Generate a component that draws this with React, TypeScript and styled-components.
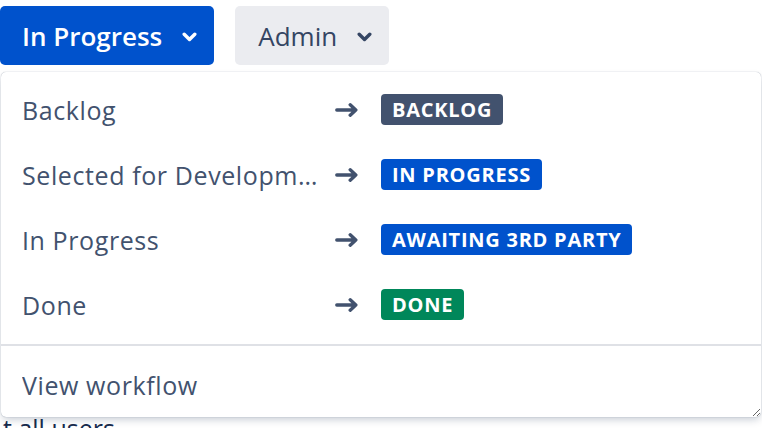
import React from 'react'
import styled, { createGlobalStyle } from 'styled-components'

const GlobalStyle = createGlobalStyle`
  html, body {
    margin: 0;
    padding: 0;
    background: #fff;
  }
  body {
    font-family: "Segoe UI", "Open Sans", "Noto Sans", sans-serif;
    color: #172b4d;
    overflow: hidden;
  }
`

type Tone = 'default' | 'progress' | 'success'

interface Transition {
  from: string
  to: string
  tone: Tone
}

const transitions: Transition[] = [
  { from: 'Backlog', to: 'Backlog', tone: 'default' },
  { from: 'Selected for Development', to: 'In Progress', tone: 'progress' },
  { from: 'In Progress', to: 'Awaiting 3rd Party', tone: 'progress' },
  { from: 'Done', to: 'Done', tone: 'success' },
]

const toneColor: Record<Tone, string> = {
  default: '#42526e',
  progress: '#0052cc',
  success: '#00875a',
}

const Chevron: React.FC<{ color: string }> = ({ color }) => (
  <svg width="15" height="10" viewBox="0 0 15 10" aria-hidden>
    <path
      d="M2.2 2.2 L7.5 7.5 L12.8 2.2"
      fill="none"
      stroke={color}
      strokeWidth="3.4"
      strokeLinecap="round"
      strokeLinejoin="round"
    />
  </svg>
)

const Arrow = () => (
  <svg width="23" height="14" viewBox="0 0 23 14" aria-hidden>
    <path
      d="M1.8 7 H20.8 M15.2 1.8 L20.8 7 L15.2 12.2"
      fill="none"
      stroke="#42526e"
      strokeWidth="3.4"
      strokeLinecap="round"
      strokeLinejoin="round"
    />
  </svg>
)

/**
 * Workflow transition dropdown, opened from the status button
 */
const App: React.FC = () => {
  return (
    <Page>
      <GlobalStyle />

      <Toolbar>
        <StatusButton>
          In Progress
          <Chevron color="#fff" />
        </StatusButton>
        <SubtleButton>
          Admin
          <Chevron color="#344563" />
        </SubtleButton>
      </Toolbar>

      <Content>
        <p>t all users</p>
      </Content>

      <Dropdown>
        <Section>
          {transitions.map((t) => (
            <Item key={t.from}>
              <ItemLabel>{t.from}</ItemLabel>
              <Arrow />
              <Lozenge tone={t.tone}>{t.to}</Lozenge>
            </Item>
          ))}
        </Section>
        <Footer>
          <Item>
            <ItemLabel>View workflow</ItemLabel>
          </Item>
        </Footer>
      </Dropdown>
    </Page>
  )
}

export default App

const Page = styled.div`
  position: relative;
  width: 762px;
  height: 428px;
  overflow: hidden;
`

const Toolbar = styled.div`
  display: flex;
  gap: 21px;
  padding-top: 6px;
`

const BaseButton = styled.button`
  display: inline-flex;
  align-items: center;
  height: 59px;
  border: none;
  border-radius: 5px;
  font-family: inherit;
  font-size: 26px;
  cursor: pointer;

  svg {
    margin-top: 2px;
  }
`

const StatusButton = styled(BaseButton)`
  gap: 20px;
  padding: 0 17px 0 22px;
  background: #0052cc;
  color: #fff;
  font-weight: 600;
`

const SubtleButton = styled(BaseButton)`
  gap: 20px;
  padding: 0 17px 0 23px;
  background: #ebecf0;
  color: #344563;
`

const Content = styled.div`
  padding: 0 3px;

  p {
    margin: 347px 0 0;
    font-size: 25px;
    line-height: 32px;
  }
`

const Dropdown = styled.div`
  position: absolute;
  top: 72px;
  left: 1px;
  width: 760px;
  height: 345px;
  box-sizing: border-box;
  background: #fff;
  border-radius: 5px;
  box-shadow: 0 4px 8px -2px rgba(9, 30, 66, 0.25), 0 0 1px rgba(9, 30, 66, 0.45);
  resize: both;
  overflow: hidden;
`

const Section = styled.div`
  padding: 5px 0 7px;
`

const Footer = styled.div`
  padding-top: 6px;
  border-top: 2px solid #dfe1e6;
`

const Item = styled.div`
  display: flex;
  align-items: center;
  height: 65px;
  padding: 0 21px;
  color: #42526e;
  font-size: 25px;
  letter-spacing: 0.6px;

  svg {
    flex-shrink: 0;
    margin: 0 23px 0 13px;
  }
`

const ItemLabel = styled.span`
  width: 300px;
  overflow: hidden;
  white-space: nowrap;
  text-overflow: ellipsis;
`

const Lozenge = styled.span<{ tone: Tone }>`
  display: inline-flex;
  align-items: center;
  height: 31px;
  padding: 0 11px;
  border-radius: 4px;
  background: ${({ tone }) => toneColor[tone]};
  color: #fff;
  font-size: 20px;
  font-weight: 700;
  letter-spacing: 0.75px;
  text-transform: uppercase;
`
